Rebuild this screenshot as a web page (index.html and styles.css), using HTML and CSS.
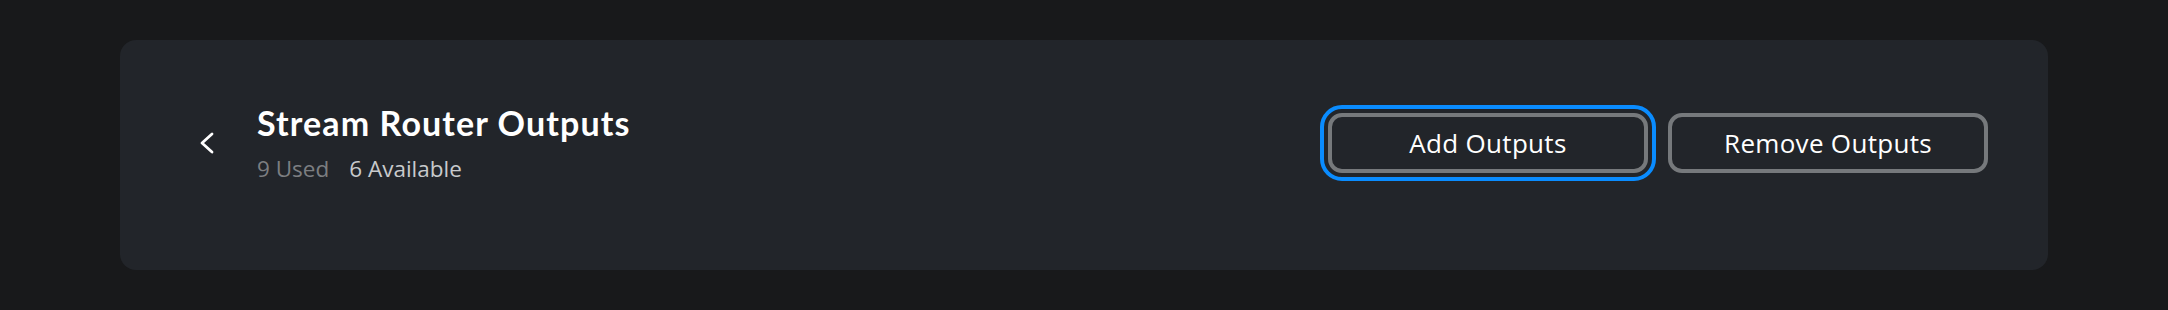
FILE: index.html
```html
<!DOCTYPE html>
<html lang="en">
<head>
    <meta charset="UTF-8">
    <meta name="viewport" content="width=device-width, initial-scale=1.0">
    <title>Stream Router Outputs</title>
    <link rel="stylesheet" href="styles.css">
</head>
<body>
    <div class="page">
        <div class="card">
            <div class="heading">
                <button class="back-button" aria-label="Back">
                    <svg width="24" height="24" viewBox="0 0 24 24" fill="none">
                        <path d="M16 3L6 12L16 21" stroke="#ffffff" stroke-width="2.8" stroke-linecap="round" stroke-linejoin="round"/>
                    </svg>
                </button>
                <div class="title-block">
                    <div class="title">Stream Router Outputs</div>
                    <div class="counts">
                        <span class="used">9 Used</span>
                        <span class="available">6 Available</span>
                    </div>
                </div>
            </div>
            <div class="actions">
                <button class="outline-button focused">Add Outputs</button>
                <button class="outline-button">Remove Outputs</button>
            </div>
        </div>
    </div>
</body>
</html>
```

FILE: styles.css
```css
body {
    margin: 0;
    padding: 0;
    background-color: #18191b;
    font-family: "Open Sans", "Noto Sans", sans-serif;
    color: #ffffff;
}

.page {
    padding: 40px 120px;
}

.card {
    height: 230px;
    box-sizing: border-box;
    background-color: #22252a;
    border-radius: 16px;
    padding: 0 60px 25px 76px;
    display: flex;
    align-items: center;
    justify-content: space-between;
}

.heading {
    display: flex;
    align-items: center;
    gap: 37px;
}

.back-button {
    width: 24px;
    height: 24px;
    padding: 0;
    background: none;
    border: none;
    cursor: pointer;
    display: flex;
}

.title {
    font-family: Lato, sans-serif;
    font-weight: bold;
    font-size: 34px;
    line-height: 40px;
    letter-spacing: 1.1px;
}

.counts {
    margin-top: 12px;
    font-size: 22.5px;
    line-height: 28px;
    display: flex;
    gap: 20px;
}

.used {
    color: #7c7e81;
}

.available {
    color: #c8cacc;
}

.actions {
    display: flex;
    gap: 20px;
}

.outline-button {
    width: 320px;
    height: 60px;
    box-sizing: border-box;
    background-color: transparent;
    border: 4px solid #76797c;
    border-radius: 14px;
    color: #ffffff;
    font-family: "Open Sans", "Noto Sans", sans-serif;
    font-size: 26px;
    letter-spacing: 0.3px;
    cursor: pointer;
}

.outline-button.focused {
    outline: 4px solid #0a8cff;
    outline-offset: 4px;
}
```
